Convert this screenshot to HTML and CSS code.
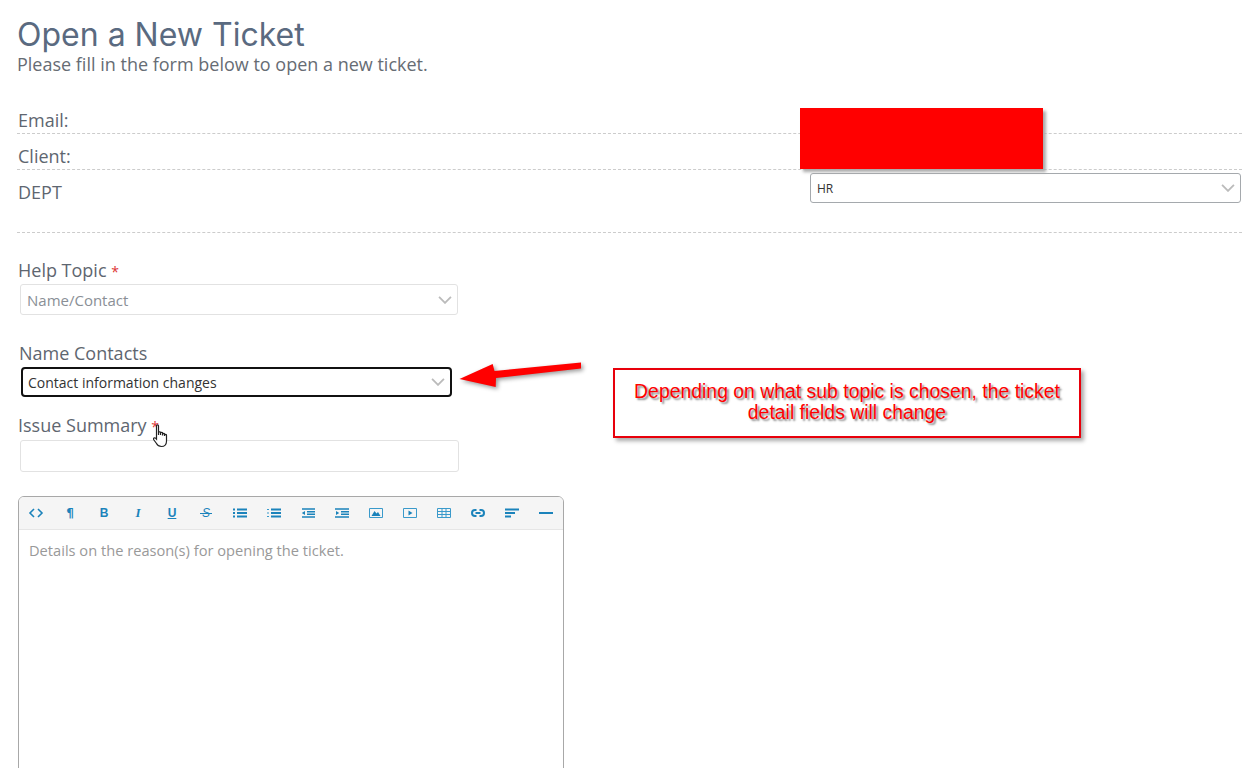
FILE: index.html
```html
<!DOCTYPE html>
<html lang="en">
<head>
	<title>Open a New Ticket</title>
	<meta charset="utf-8" />
	<link rel="stylesheet" href="styles.css">
</head>
<body>
	<div id="wrap">
		<h1>Open a New Ticket</h1>
		<p class="sub">Please fill in the form below to open a new ticket.</p>

		<div class="info-row info-email"><label>Email:</label></div>
		<div class="info-row info-client"><label>Client:</label></div>
		<div class="info-row info-dept">
			<label>DEPT</label>
			<div class="select select-dept">
				<span>HR</span>
				<svg class="chev" viewBox="0 0 12 7"><path d="M.8.8 6 6l5.2-5.2"/></svg>
			</div>
		</div>

		<div class="field field-topic">
			<label>Help Topic <i>*</i></label>
			<div class="select select-topic">
				<span>Name/Contact</span>
				<svg class="chev" viewBox="0 0 12 7"><path d="M.8.8 6 6l5.2-5.2"/></svg>
			</div>
		</div>

		<div class="field field-contacts">
			<label>Name Contacts</label>
			<div class="select select-focus">
				<span>Contact information changes</span>
				<svg class="chev" viewBox="0 0 12 7"><path d="M.8.8 6 6l5.2-5.2"/></svg>
			</div>
		</div>

		<div class="field field-summary">
			<label>Issue Summary <i>*</i></label>
			<div class="input"></div>
		</div>

		<div class="editor">
			<div class="toolbar">
				<span class="tool"><svg viewBox="0 0 14 10"><path class="ln" d="M5 1 1 5l4 4M9 1l4 4-4 4"/></svg></span>
				<span class="tool txt para">¶</span>
				<span class="tool txt">B</span>
				<span class="tool txt it">I</span>
				<span class="tool txt un">U</span>
				<span class="tool txt st">S</span>
				<span class="tool"><svg viewBox="0 0 14 10"><path class="ln wide" d="M4 1.500h10M4 5h10M4 8.500h10"/><path class="ln wide" d="M0 1.500h2M0 5h2M0 8.500h2"/></svg></span>
				<span class="tool"><svg viewBox="0 0 14 10"><path class="ln wide" d="M4 1.500h10M4 5h10M4 8.500h10"/><path class="thin" d="M0 1.500h2M0 5h2M0 8.500h2"/></svg></span>
				<span class="tool"><svg viewBox="0 0 14 10"><path class="ln" d="M1 1h13M6 3.700h8M6 6.300h8M1 9h13"/><path class="fill" d="M4 3v4L0.800 5z"/></svg></span>
				<span class="tool"><svg viewBox="0 0 14 10"><path class="ln" d="M0 1h14M6 3.700h8M6 6.300h8M0 9h14"/><path class="fill" d="M1 3v4l3.200-2z"/></svg></span>
				<span class="tool"><svg viewBox="0 0 14 10"><path class="thin" d="M.5.500h13v9H.5z"/><path class="fill" d="M2.500 8 5.500 3 7.500 5.500 9 4 11.500 8z"/></svg></span>
				<span class="tool"><svg viewBox="0 0 14 10"><path class="thin" d="M.5.500h13v9H.5z"/><path class="fill" d="M5.500 2.500v5l4-2.500z"/></svg></span>
				<span class="tool"><svg viewBox="0 0 14 10"><path class="thin" d="M.5.500h13v9H.5zM.5 3.500h13M.5 6.500h13M5 .5v9M9 .5v9"/></svg></span>
				<span class="tool"><svg viewBox="0 0 14 10"><path class="ln wide" d="M5.500 2H4a3 3 0 0 0 0 6h1.500M8.500 2H10a3 3 0 0 1 0 6H8.500M4.500 5h5"/></svg></span>
				<span class="tool"><svg viewBox="0 0 14 10"><path class="ln wide" d="M0 1.500h14M0 5h10M0 8.500h6"/></svg></span>
				<span class="tool"><svg viewBox="0 0 14 10"><path class="ln wide" d="M0 5h14"/></svg></span>
			</div>
			<div class="editor-body">Details on the reason(s) for opening the ticket.</div>
		</div>
	</div>

	<!-- screenshot annotations, sit on top of the form -->
	<div class="redact"></div>
	<svg class="arrow" viewBox="0 0 140 45">
		<path d="M9.500 24 42.700 9 44.500 16 131 7.500V13.500L46 23 45.700 32z"/>
	</svg>
	<div class="callout">Depending on what sub topic is chosen, the ticket detail fields will change</div>
	<svg class="cursor" viewBox="0 0 16 24">
		<path d="M3.500 1.800c0-1.200 2-1.200 2 0v9.200V8.500c0-1 2-1 2 0V11 9c0-1 2-1 2 0v2.500-1.300c0-1 2-1 2 0V12v-.8c0-1 2-1 2 0v6c0 3-2 5.300-5 5.300-2.700 0-4-1-5-3L.6 15.500c-.6-1.300 1-2.300 2-1.300l.9 1z"/>
	</svg>
</body>
</html>
```

FILE: styles.css
```css
html, body {
	height: 100%;
	margin: 0;
	overflow: hidden;
}
body {
	font-family: "Open Sans", "Liberation Sans", sans-serif;
	background: #fff;
	color: #5e6670;
	position: relative;
}
#wrap {
	padding: 0 17px;
}
h1 {
	margin: 0;
	padding-top: 17px;
	font-family: Inter, "Open Sans", sans-serif;
	font-size: 32px;
	font-weight: 400;
	line-height: 35px;
	color: #5a6a80;
}
.sub {
	margin: 0;
	font-size: 18px;
	line-height: 24px;
	color: #666c74;
}
label {
	font-size: 18px;
	line-height: 24px;
	color: #5e6670;
}
label i {
	font-style: normal;
	color: #d33;
	font-size: 14px;
	line-height: 0;
}

.info-row {
	border-bottom: 1px dashed #ccc;
	padding-left: 1px;
	display: flex;
	justify-content: space-between;
	height: 35px;
	box-sizing: content-box;
}
.info-email {
	margin-top: 32px;
	height: 25px;
}
.info-client label {
	margin-top: 10px;
}
.info-dept {
	height: 62px;
}
.info-dept label {
	margin-top: 10px;
}

.select {
	display: flex;
	align-items: center;
	justify-content: space-between;
	box-sizing: border-box;
	background: #fff;
	border-radius: 3px;
	font-size: 13px;
}
.chev {
	width: 14px;
	height: 8px;
	fill: none;
	stroke: #bbb;
	stroke-width: 1.6;
}
.select-dept {
	width: 431px;
	height: 30px;
	margin-top: 3px;
	margin-right: 1px;
	padding: 0 5px 0 6px;
	border: 1px solid #a5a9ad;
	color: #333;
	font-size: 12px;
}

.field label {
	display: block;
	padding-left: 1px;
}
.field-topic {
	margin-top: 25px;
}
.select-topic {
	width: 438px;
	height: 31px;
	margin: 2px 0 0 3px;
	padding: 0 5px 0 6px;
	border: 1px solid #e2e2e2;
	color: #8a8f96;
	font-size: 15px;
}
.field-contacts {
	margin-top: 26px;
}
.field-contacts label {
	padding-left: 2px;
}
.select-focus {
	width: 431px;
	height: 30px;
	margin: 2px 0 0 4px;
	padding: 0 5px 0 5px;
	border: 2px solid #111;
	border-radius: 4px;
	color: #333;
	font-size: 14px;
}
.field-summary {
	margin-top: 16px;
}
.input {
	width: 439px;
	height: 32px;
	box-sizing: border-box;
	margin: 3px 0 0 3px;
	border: 1px solid #e2e2e2;
	border-radius: 3px;
}

.editor {
	margin: 24px 0 0 1px;
	width: 546px;
	height: 400px;
	box-sizing: border-box;
	border: 1px solid #a8a8a8;
	border-radius: 6px 6px 0 0;
}
.toolbar {
	display: flex;
	height: 33px;
	box-sizing: border-box;
	align-items: center;
	background: #f5f5f5;
	border-bottom: 1px solid #e6e6e6;
	border-radius: 5px 5px 0 0;
}
.tool {
	width: 34px;
	flex: none;
	display: flex;
	justify-content: center;
	align-items: center;
	color: #1b83bb;
}
.tool svg {
	width: 14px;
	height: 10px;
	overflow: visible;
	fill: none;
}
.ln {
	stroke: #1b83bb;
	stroke-width: 1.6;
	fill: none;
}
.wide {
	stroke-width: 2;
}
.thin {
	stroke: #3a9acb;
	stroke-width: 1;
	fill: none;
}
.fill {
	fill: #1b83bb;
}
.txt {
	font-family: "Liberation Sans", sans-serif;
	font-size: 12px;
	font-weight: 700;
	line-height: 14px;
}
.para {
	font-family: "DejaVu Sans", sans-serif;
	font-size: 12px;
}
.it {
	font-family: "Liberation Serif", serif;
	font-style: italic;
	font-size: 13px;
}
.un {
	text-decoration: underline;
}
.st {
	position: relative;
	font-style: italic;
	font-weight: 400;
}
.st::after {
	content: "";
	position: absolute;
	left: 11px;
	right: 11px;
	top: 7px;
	height: 1px;
	background: #1b83bb;
}
.editor-body {
	padding: 10px 10px;
	font-size: 14.65px;
	line-height: 20px;
	color: #999;
}

/* annotations */
.redact {
	position: absolute;
	left: 800px;
	top: 108px;
	width: 243px;
	height: 61px;
	background: #f00;
	box-shadow: 3px 3px 3px #aaa;
}
.arrow {
	position: absolute;
	left: 450px;
	top: 355px;
	width: 140px;
	height: 45px;
	fill: #f00;
	filter: drop-shadow(2px 2px 2px #999);
}
.callout {
	position: absolute;
	left: 613px;
	top: 368px;
	width: 468px;
	height: 70px;
	box-sizing: border-box;
	padding: 11px 16px 0;
	border: 2px solid #e8000b;
	background: #fff;
	box-shadow: 3px 3px 4px #aaa;
	font-family: "Liberation Sans", sans-serif;
	font-size: 19.4px;
	line-height: 21px;
	text-align: center;
	color: #f00;
	text-shadow: 2px 2px 2px #888;
}
.cursor {
	position: absolute;
	left: 153px;
	top: 424px;
	width: 16px;
	height: 24px;
	fill: #fff;
	stroke: #222;
	stroke-width: 1.2;
}
```
